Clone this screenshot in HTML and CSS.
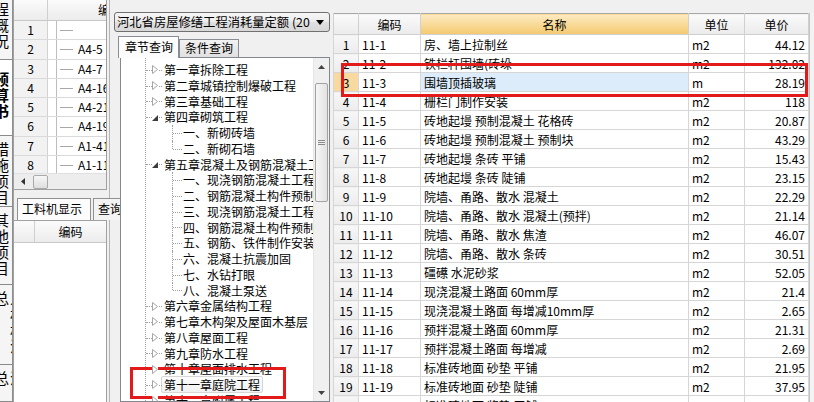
FILE: index.html
```html
<!DOCTYPE html>
<html lang="zh-CN">
<head>
    <meta charset="UTF-8">
    <title>定额查询</title>
    <link rel="stylesheet" href="styles.css">
</head>
<body>
<div class="app">

    <!-- 左侧竖排页签 -->
    <div class="side-tabs">
        <div class="side-tab t1"><span>工程概况</span></div>
        <div class="side-tab t2 active"><span>预算书</span></div>
        <div class="side-tab t3"><span>措施项目</span></div>
        <div class="side-tab t4"><span>其他项目</span></div>
        <div class="side-tab t5"><span>人材机汇总</span></div>
        <div class="side-tab t6"><span>费用汇总</span></div>
    </div>

    <!-- 预算书表格（左侧窄栏） -->
    <div class="left-pane">
        <div class="def-grid">
            <div class="g-head">
                <div class="c-no"></div>
                <div class="c-title">编码</div>
            </div>
            <div class="g-body">
                <div class="g-row"><div class="c-no">1</div><div class="c-br"></div><div class="c-code"></div></div>
                <div class="g-row"><div class="c-no">2</div><div class="c-br"></div><div class="c-code">A4-5</div></div>
                <div class="g-row"><div class="c-no">3</div><div class="c-br"></div><div class="c-code">A4-7</div></div>
                <div class="g-row"><div class="c-no">4</div><div class="c-br"></div><div class="c-code">A4-16</div></div>
                <div class="g-row"><div class="c-no">5</div><div class="c-br"></div><div class="c-code">A4-21</div></div>
                <div class="g-row"><div class="c-no">6</div><div class="c-br"></div><div class="c-code">A4-19</div></div>
                <div class="g-row"><div class="c-no">7</div><div class="c-br"></div><div class="c-code">A1-41</div></div>
                <div class="g-row"><div class="c-no">8</div><div class="c-br"></div><div class="c-code">A1-11</div></div>
            </div>
            <div class="hscroll">
                <svg class="arr-l" width="4" height="7" viewBox="0 0 4 7"><path d="M4 0 L0 3.5 L4 7 Z" fill="#333"/></svg>
                <span class="thumb-h"></span>
            </div>
        </div>
        <div class="sub-tabs">
            <span class="stab on">工料机显示</span>
            <span class="stab">查询</span>
        </div>
        <div class="res-grid">
            <div class="g-head">
                <div class="c-no2"></div>
                <div class="c-title2">编码</div>
            </div>
        </div>
    </div>

    <!-- 定额库章节查询 -->
    <div class="mid-pane">
        <div class="combo">
            <span class="combo-text">河北省房屋修缮工程消耗量定额 (2013)</span>
            <svg class="combo-arrow" width="8" height="5" viewBox="0 0 8 5"><path d="M0 0 H8 L4 5 Z" fill="#000"/></svg>
        </div>
        <div class="tabs">
            <span class="tab on">章节查询</span>
            <span class="tab">条件查询</span>
        </div>
        <div class="tree-box">
            <div class="tree">
                <div class="node"><svg class="exp" width="6" height="9" viewBox="0 0 6 9"><path d="M0.5 0.5 L5.5 4.5 L0.5 8.5 Z" fill="#fff" stroke="#a6a6a6"/></svg>第一章拆除工程</div>
                <div class="node"><svg class="exp" width="6" height="9" viewBox="0 0 6 9"><path d="M0.5 0.5 L5.5 4.5 L0.5 8.5 Z" fill="#fff" stroke="#a6a6a6"/></svg>第二章城镇控制爆破工程</div>
                <div class="node"><svg class="exp" width="6" height="9" viewBox="0 0 6 9"><path d="M0.5 0.5 L5.5 4.5 L0.5 8.5 Z" fill="#fff" stroke="#a6a6a6"/></svg>第三章基础工程</div>
                <div class="node"><svg class="exp" width="6" height="9" viewBox="0 0 6 9"><path d="M6 2 V8 H0 Z" fill="#3c3c3c"/></svg>第四章砌筑工程</div>
                <div class="sec">一、新砌砖墙</div>
                <div class="sec last">二、新砌石墙</div>
                <div class="node"><svg class="exp" width="6" height="9" viewBox="0 0 6 9"><path d="M6 2 V8 H0 Z" fill="#3c3c3c"/></svg>第五章混凝土及钢筋混凝土工程</div>
                <div class="sec">一、现浇钢筋混凝土工程</div>
                <div class="sec">二、钢筋混凝土构件预制</div>
                <div class="sec">三、现浇钢筋混凝土工程</div>
                <div class="sec">四、钢筋混凝土构件预制</div>
                <div class="sec">五、钢筋、铁件制作安装</div>
                <div class="sec">六、混凝土抗震加固</div>
                <div class="sec">七、水钻打眼</div>
                <div class="sec last">八、混凝土泵送</div>
                <div class="node"><svg class="exp" width="6" height="9" viewBox="0 0 6 9"><path d="M0.5 0.5 L5.5 4.5 L0.5 8.5 Z" fill="#fff" stroke="#a6a6a6"/></svg>第六章金属结构工程</div>
                <div class="node"><svg class="exp" width="6" height="9" viewBox="0 0 6 9"><path d="M0.5 0.5 L5.5 4.5 L0.5 8.5 Z" fill="#fff" stroke="#a6a6a6"/></svg>第七章木构架及屋面木基层</div>
                <div class="node"><svg class="exp" width="6" height="9" viewBox="0 0 6 9"><path d="M0.5 0.5 L5.5 4.5 L0.5 8.5 Z" fill="#fff" stroke="#a6a6a6"/></svg>第八章屋面工程</div>
                <div class="node"><svg class="exp" width="6" height="9" viewBox="0 0 6 9"><path d="M0.5 0.5 L5.5 4.5 L0.5 8.5 Z" fill="#fff" stroke="#a6a6a6"/></svg>第九章防水工程</div>
                <div class="node"><svg class="exp" width="6" height="9" viewBox="0 0 6 9"><path d="M0.5 0.5 L5.5 4.5 L0.5 8.5 Z" fill="#fff" stroke="#a6a6a6"/></svg>第十章屋面排水工程</div>
                <div class="node"><svg class="exp" width="6" height="9" viewBox="0 0 6 9"><path d="M0.5 0.5 L5.5 4.5 L0.5 8.5 Z" fill="#fff" stroke="#a6a6a6"/></svg><span class="sel">第十一章庭院工程</span></div>
                <div class="node"><svg class="exp" width="6" height="9" viewBox="0 0 6 9"><path d="M0.5 0.5 L5.5 4.5 L0.5 8.5 Z" fill="#fff" stroke="#a6a6a6"/></svg>第十二章附属工程</div>
            </div>
            <div class="vscroll">
                <div class="vs-btn"><svg width="7" height="4" viewBox="0 0 7 4"><path d="M0 4 L3.5 0 L7 4 Z" fill="#444"/></svg></div>
                <div class="vs-track">
                    <div class="thumb-v"><span class="grip"></span></div>
                </div>
                <div class="vs-btn"><svg width="7" height="4" viewBox="0 0 7 4"><path d="M0 0 L3.5 4 L7 0 Z" fill="#444"/></svg></div>
            </div>
        </div>
        <div class="mark mark-tree"></div>
    </div>

    <!-- 定额列表 -->
    <div class="right-pane">
        <table class="quota">
            <colgroup>
                <col style="width:25px">
                <col style="width:62px">
                <col style="width:268px">
                <col style="width:56px">
                <col style="width:64px">
            </colgroup>
            <thead>
                <tr><th></th><th>编码</th><th class="sorted">名称</th><th>单位</th><th>单价</th></tr>
            </thead>
            <tbody>
                <tr><td class="no">1</td><td>11-1</td><td class="name">房、墙上拉制丝</td><td>m2</td><td class="price">44.12</td></tr>
                <tr><td class="no">2</td><td>11-2</td><td class="name">铁栏杆围墙(砖垛</td><td>m2</td><td class="price">132.02</td></tr>
                <tr class="cur"><td class="no">3</td><td>11-3</td><td class="name">围墙顶插玻璃</td><td>m</td><td class="price">28.19</td></tr>
                <tr><td class="no">4</td><td>11-4</td><td class="name">栅栏门制作安装</td><td>m2</td><td class="price">118</td></tr>
                <tr><td class="no">5</td><td>11-5</td><td class="name">砖地起墁 预制混凝土 花格砖</td><td>m2</td><td class="price">20.87</td></tr>
                <tr><td class="no">6</td><td>11-6</td><td class="name">砖地起墁 预制混凝土 预制块</td><td>m2</td><td class="price">43.29</td></tr>
                <tr><td class="no">7</td><td>11-7</td><td class="name">砖地起墁 条砖 平铺</td><td>m2</td><td class="price">15.43</td></tr>
                <tr><td class="no">8</td><td>11-8</td><td class="name">砖地起墁 条砖 陡铺</td><td>m2</td><td class="price">23.15</td></tr>
                <tr><td class="no">9</td><td>11-9</td><td class="name">院墙、甬路、散水 混凝土</td><td>m2</td><td class="price">22.29</td></tr>
                <tr><td class="no">10</td><td>11-10</td><td class="name">院墙、甬路、散水 混凝土(预拌)</td><td>m2</td><td class="price">21.14</td></tr>
                <tr><td class="no">11</td><td>11-11</td><td class="name">院墙、甬路、散水 焦渣</td><td>m2</td><td class="price">46.07</td></tr>
                <tr><td class="no">12</td><td>11-12</td><td class="name">院墙、甬路、散水 条砖</td><td>m2</td><td class="price">30.51</td></tr>
                <tr><td class="no">13</td><td>11-13</td><td class="name">礓礤 水泥砂浆</td><td>m2</td><td class="price">52.05</td></tr>
                <tr><td class="no">14</td><td>11-14</td><td class="name">现浇混凝土路面 60mm厚</td><td>m2</td><td class="price">21.4</td></tr>
                <tr><td class="no">15</td><td>11-15</td><td class="name">现浇混凝土路面 每增减10mm厚</td><td>m2</td><td class="price">2.65</td></tr>
                <tr><td class="no">16</td><td>11-16</td><td class="name">预拌混凝土路面 60mm厚</td><td>m2</td><td class="price">21.31</td></tr>
                <tr><td class="no">17</td><td>11-17</td><td class="name">预拌混凝土路面 每增减</td><td>m2</td><td class="price">2.69</td></tr>
                <tr><td class="no">18</td><td>11-18</td><td class="name">标准砖地面 砂垫 平铺</td><td>m2</td><td class="price">21.95</td></tr>
                <tr><td class="no">19</td><td>11-19</td><td class="name">标准砖地面 砂垫 陡铺</td><td>m2</td><td class="price">37.95</td></tr>
                <tr><td class="no">20</td><td>11-20</td><td class="name">标准砖地面 浆垫 平铺</td><td>m2</td><td class="price">24.6</td></tr>
            </tbody>
        </table>
        <div class="edge"></div>
        <div class="mark mark-row"></div>
    </div>

</div>
</body>
</html>
```

FILE: styles.css
```css
* {
    box-sizing: border-box;
}
body {
    margin: 0;
    background: #f0f0f0;
    font-family: "Noto Sans CJK SC", "Liberation Sans", sans-serif;
    font-size: 12px;
    color: #000;
    overflow: hidden;
}
.app {
    display: flex;
    width: 814px;
    height: 402px;
    overflow: hidden;
}

/* 竖排页签 */
.side-tabs {
    width: 13px;
    flex: none;
    display: flex;
    flex-direction: column;
    background: #f5f5f5;
    border-right: 1px solid #8e8e8e;
    overflow: hidden;
}
.side-tab {
    flex: none;
    overflow: hidden;
    border-bottom: 1px solid #8a8a8a;
    padding-top: 6px;
}
.side-tab span {
    display: block;
    writing-mode: vertical-rl;
    font-size: 15px;
    line-height: 16px;
    margin-left: -7px;
    letter-spacing: 1px;
}
.side-tab.active {
    background: #fff;
    font-weight: bold;
}
.t1 { height: 60px; padding-top: 0; }
.t1 span { margin-top: -14px; }
.t2 { height: 76px; padding-top: 12px; }
.t3 { height: 71px; }
.t4 { height: 78px; }
.t5 { height: 80px; }
.t6 { flex: 1; }

/* 左侧表格 */
.left-pane {
    width: 97px;
    flex: none;
    display: flex;
    flex-direction: column;
    padding-right: 2px;
    border-right: 1px solid #b5b5b5;
}
.def-grid {
    height: 190px;
    flex: none;
    display: flex;
    flex-direction: column;
    background: #fff;
    border-left: 1px solid #a0a0a0;
    border-right: 1px solid #a0a0a0;
    border-bottom: 1px solid #a0a0a0;
}
.g-head {
    height: 21px;
    flex: none;
    display: flex;
    background: linear-gradient(#fbfbfb, #ececec);
    border-bottom: 1px solid #c8c8c8;
    line-height: 20px;
}
.g-head .c-no {
    width: 34px;
    border-right: 1px solid #cfcfcf;
}
.c-title {
    flex: 1;
    padding-left: 50px;
    white-space: nowrap;
    overflow: hidden;
}
.g-body {
    flex: 1;
    overflow: hidden;
}
.g-row {
    height: 19.3px;
    display: flex;
    border-bottom: 1px solid #dadada;
    line-height: 18px;
}
.g-row .c-no {
    width: 34px;
    text-align: center;
    background: #f2f2f2;
    border-right: 1px solid #d2d2d2;
}
.c-br {
    width: 9px;
    border-right: 1px solid #bdbdbd;
}
.c-code {
    flex: 1;
    position: relative;
    padding-left: 21px;
    white-space: nowrap;
    overflow: hidden;
}
.c-code::before {
    content: "";
    position: absolute;
    left: 3px;
    top: 50%;
    width: 13px;
    border-top: 1px solid #a8a8a8;
}
.hscroll {
    height: 16px;
    flex: none;
    display: flex;
    align-items: center;
    background: #ededed;
    border-top: 1px solid #e0e0e0;
    padding-left: 7px;
}
.arr-l {
    display: block;
}
.thumb-h {
    width: 15px;
    height: 14px;
    margin-left: 8px;
    border: 1px solid #a9a9a9;
    border-radius: 2px;
    background: linear-gradient(#f7f7f7, #dedede);
}
.sub-tabs {
    height: 30px;
    flex: none;
    display: flex;
    align-items: flex-end;
    padding-left: 3px;
    border-left: 1px solid #a0a0a0;
}
.stab {
    height: 22px;
    line-height: 20px;
    padding: 0 8px 0 4px;
    border: 1px solid #909090;
    border-bottom: none;
    background: #f3f3f3;
    white-space: nowrap;
}
.stab.on {
    background: #fcfcfc;
}
.stab + .stab {
    margin-left: 2px;
}
.res-grid {
    flex: 1;
    background: #fff;
    border-left: 1px solid #a0a0a0;
    border-right: 1px solid #a0a0a0;
    border-top: 1px solid #a0a0a0;
}
.res-grid .g-head {
    height: 22px;
    line-height: 21px;
}
.c-no2 {
    width: 21px;
    border-right: 1px solid #cfcfcf;
}
.c-title2 {
    flex: 1;
    text-align: center;
}

/* 章节查询 */
.mid-pane {
    width: 223px;
    flex: none;
    position: relative;
    display: flex;
    flex-direction: column;
    padding: 12px 0 0 4px;
}
.combo {
    width: 216px;
    height: 20px;
    flex: none;
    display: flex;
    align-items: center;
    padding: 0 5px 0 2px;
    border: 1px solid #707070;
    border-radius: 3px;
    background: linear-gradient(#f6f6f6, #ececec 50%, #e0e0e0 50%, #d8d8d8);
}
.combo-text {
    flex: 1;
    font-size: 12.3px;
    line-height: 18px;
    white-space: nowrap;
    overflow: hidden;
    margin-right: 6px;
}
.combo-arrow {
    display: block;
    flex: none;
}
.tabs {
    height: 22px;
    flex: none;
    margin-top: 3px;
    padding-left: 4px;
    display: flex;
    align-items: flex-end;
    position: relative;
    z-index: 1;
}
.tab {
    height: 18px;
    line-height: 16px;
    padding: 0 5px;
    border: 1px solid #898c95;
    border-bottom: none;
    background: linear-gradient(#f2f2f2, #e0e0e0);
    white-space: nowrap;
}
.tab.on {
    height: 22px;
    line-height: 20px;
    width: 61px;
    padding: 0 6px;
    margin-bottom: -1px;
    background: #fcfcfc;
}
.tree-box {
    flex: 1;
    margin-left: 6px;
    width: 210px;
    display: flex;
    background: #fff;
    border: 1px solid #828790;
    overflow: hidden;
}
.tree {
    flex: 1;
    position: relative;
    padding-top: 4px;
    overflow: hidden;
}
.tree::before {
    content: "";
    position: absolute;
    left: 24px;
    top: 0;
    bottom: 0;
    border-left: 1px dotted #a0a0a0;
}
.node,
.sec {
    height: 15.75px;
    line-height: 15.75px;
    white-space: nowrap;
    position: relative;
}
.node {
    display: flex;
    align-items: center;
    padding-left: 31px;
}
.node::before {
    content: "";
    position: absolute;
    left: 25px;
    width: 16px;
    top: 50%;
    border-top: 1px dotted #a0a0a0;
}
.exp {
    display: block;
    flex: none;
    margin-right: 6px;
    position: relative;
    z-index: 1;
    background: #fff;
}
.sec {
    padding-left: 62px;
}
.sec::before {
    content: "";
    position: absolute;
    left: 51px;
    top: 0;
    bottom: 0;
    border-left: 1px dotted #a0a0a0;
}
.sec.last::before {
    bottom: 50%;
}
.sec::after {
    content: "";
    position: absolute;
    left: 52px;
    width: 9px;
    top: 50%;
    border-top: 1px dotted #a0a0a0;
}
.sel {
    margin-left: -3px;
    padding: 0 2px;
    line-height: 15px;
    border: 1px solid #d6d6d6;
    border-radius: 2px;
    background: linear-gradient(#fdfdfd, #f1f1f1);
}
.vscroll {
    width: 16px;
    flex: none;
    display: flex;
    flex-direction: column;
    background: #f0f0f0;
    border-left: 1px solid #e6e6e6;
}
.vs-btn {
    height: 17px;
    flex: none;
    display: flex;
    align-items: center;
    justify-content: center;
}
.vs-track {
    flex: 1;
    padding-top: 8px;
}
.thumb-v {
    height: 119px;
    margin: 0 1px;
    border: 1px solid #a2a2a2;
    border-radius: 2px;
    background: linear-gradient(to right, #f6f6f6, #e2e2e2);
    display: flex;
    align-items: center;
    justify-content: center;
}
.grip {
    width: 7px;
    height: 5px;
    border-top: 1px solid #8a8a8a;
    border-bottom: 1px solid #8a8a8a;
    background: linear-gradient(#f0f0f0 40%, #8a8a8a 40%, #8a8a8a 60%, #f0f0f0 60%);
}

/* 定额列表 */
.right-pane {
    flex: 1;
    position: relative;
    display: flex;
    align-items: flex-start;
    padding-top: 13px;
    overflow: hidden;
}
.quota {
    width: 475px;
    flex: none;
    border-collapse: collapse;
    table-layout: fixed;
    background: #fff;
    border-top: 1px solid #a8a8a8;
    border-left: 1px solid #a8a8a8;
}
.quota th {
    height: 21px;
    padding: 0;
    font-weight: normal;
    text-align: center;
    background: linear-gradient(#fafafa, #ebebeb);
    border: 1px solid #d0d0d0;
    border-top: none;
}
.quota th.sorted {
    background: linear-gradient(#fdebc3, #f4c96f);
}
.quota td {
    height: 19px;
    padding: 0 3px;
    line-height: 17px;
    white-space: nowrap;
    overflow: hidden;
    border: 1px solid #d6d6d6;
}
.quota td.no {
    padding: 0;
    text-align: center;
    background: linear-gradient(#f7f7f7, #ececec);
}
.quota td.price {
    text-align: right;
    padding-right: 3px;
}
.quota tr.cur td.no {
    background: #f8d9a0;
}
.quota tr.cur td.name {
    background: #ddecfb;
}
.edge {
    width: 5px;
    height: 100%;
    flex: none;
    border-left: 1px solid #c4c4c4;
    background: #f3f3f3;
}

/* 红色标注框 */
.mark {
    position: absolute;
    border: 3px solid #e31a1a;
    pointer-events: none;
}
.mark-tree {
    left: 20px;
    top: 367px;
    width: 156px;
    height: 32px;
}
.mark-row {
    left: 8px;
    top: 63px;
    width: 467px;
    height: 34px;
}
```
